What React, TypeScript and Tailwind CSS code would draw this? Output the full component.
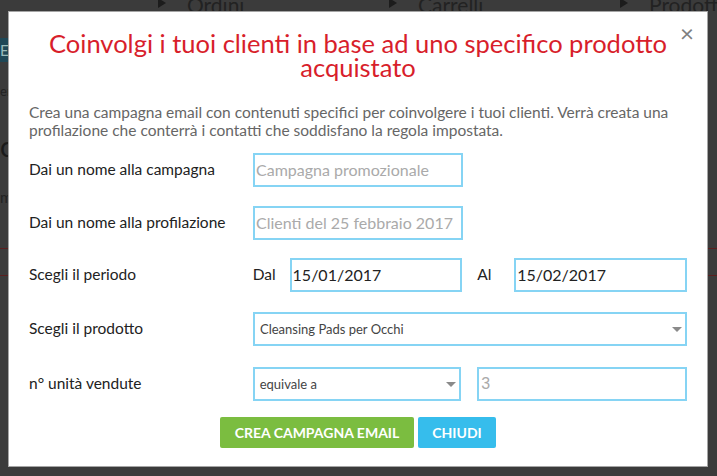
import React from 'react';

const navItems = ['Ordini', 'Carrelli', 'Prodotti'];

const Caret: React.FC = () => (
    <span className="ml-auto mr-[3px] h-0 w-0 border-x-[5px] border-t-[5px] border-x-transparent border-t-[#8a8a8a]" />
);

const inputBox = 'h-[34px] border-2 border-[#86d4f4] bg-white leading-none flex items-center';

const App: React.FC = () => {
    return (
        <div className="relative h-[476px] w-[717px] overflow-hidden bg-[#3b3b3b] font-['Lato',sans-serif]">
            {/* page behind the overlay */}
            <div className="flex h-[11px] items-end overflow-hidden pl-[158px]">
                {navItems.map((item) => (
                    <div key={item} className="flex w-[231px] shrink-0 items-end">
                        <span className="mb-[3px] h-0 w-0 border-y-[5px] border-l-[8px] border-y-transparent border-l-[#1c1c1c]" />
                        <span className="-mb-[4px] ml-[21px] text-[21px] leading-[20px] text-[#222]">{item}</span>
                    </div>
                ))}
            </div>
            <div className="mt-[27px] flex h-[24px] w-[8px] items-center overflow-hidden bg-[#1e4756] text-[15px] text-[#9bb]">Ec</div>
            <div className="mt-[20px] w-[8px] overflow-hidden text-[13px] text-[#222]">en</div>
            <div className="mt-[30px] w-[8px] overflow-hidden text-[28px] leading-[28px] text-[#1a1a1a]">ct</div>
            <div className="mt-[26px] w-[8px] overflow-hidden text-[15px] text-[#222]">m</div>
            <div className="mt-[40px] h-px w-full bg-[#5b1f1f]" />
            <div className="mt-[26px] h-px w-full bg-[#5b1f1f]" />

            {/* modal */}
            <div className="absolute left-[8px] top-[11px] flex h-[456px] w-[700px] flex-col border border-[#a5a5a5] bg-white px-[20px]">
                <button className="absolute right-[13px] top-[9px] text-[24px] leading-none text-[#7f7f7f]">×</button>

                <h2 className="mt-[19px] text-center text-[25.5px] leading-[24px] text-[#d81e2b]">
                    Coinvolgi i tuoi clienti in base ad uno specifico prodotto
                    <br />
                    acquistato
                </h2>

                <p className="mt-[24px] text-[15.5px] leading-[18px] text-[#666]">
                    Crea una campagna email con contenuti specifici per coinvolgere i tuoi clienti. Verrà creata una profilazione che conterrà i contatti che soddisfano la regola impostata.
                </p>

                <div className="mt-[14px] flex items-center">
                    <label className="w-[224px] text-[15.5px] text-[#222]">Dai un nome alla campagna</label>
                    <div className={`${inputBox} w-[210px] pl-[1px] text-[16px] text-[#aaa]`}>Campagna promozionale</div>
                </div>

                <div className="mt-[19px] flex items-center">
                    <label className="w-[224px] text-[15.5px] text-[#222]">Dai un nome alla profilazione</label>
                    <div className={`${inputBox} w-[210px] pl-[1px] text-[16px] text-[#aaa]`}>Clienti del 25 febbraio 2017</div>
                </div>

                <div className="mt-[18px] flex items-center">
                    <label className="w-[224px] text-[15.5px] text-[#222]">Scegli il periodo</label>
                    <span className="w-[37px] text-[15.5px] text-[#222]">Dal</span>
                    <div className={`${inputBox} w-[173px] pl-[1px] text-[16px] text-[#222]`}>15/01/2017</div>
                    <span className="ml-[15px] w-[37px] text-[15.5px] text-[#222]">Al</span>
                    <div className={`${inputBox} w-[173px] pl-[1px] text-[16px] text-[#222]`}>15/02/2017</div>
                </div>

                <div className="mt-[20px] flex items-center">
                    <label className="w-[224px] text-[15.5px] text-[#222]">Scegli il prodotto</label>
                    <div className={`${inputBox} w-[434px] pl-[5px] text-[13px] text-[#444]`}>
                        Cleansing Pads per Occhi
                        <Caret />
                    </div>
                </div>

                <div className="mt-[21px] flex items-center">
                    <label className="w-[224px] text-[15.5px] text-[#222]">n° unità vendute</label>
                    <div className={`${inputBox} w-[209px] pl-[5px] text-[13px] text-[#444]`}>
                        equivale a
                        <Caret />
                    </div>
                    <div className={`${inputBox} ml-[16px] w-[210px] pl-[2px] font-['Liberation_Sans',sans-serif] text-[16px] text-[#aaa]`}>3</div>
                </div>

                <div className="mt-[16px] flex justify-center gap-[4px]">
                    <button className="h-[31px] w-[194px] rounded-[2px] bg-[#7bbd40] text-[14px] font-bold text-white">CREA CAMPAGNA EMAIL</button>
                    <button className="h-[31px] w-[78px] rounded-[2px] bg-[#36bdec] text-[14px] font-bold text-white">CHIUDI</button>
                </div>
            </div>
        </div>
    );
};

export default App;
